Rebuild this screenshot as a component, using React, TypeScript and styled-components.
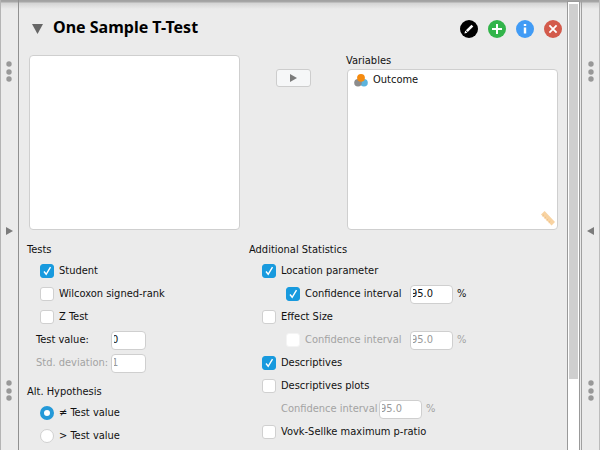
import React from 'react';
import styled, { createGlobalStyle } from 'styled-components';

const GlobalStyle = createGlobalStyle`
  * { box-sizing: border-box; }
  body {
    margin: 0;
    background: #ebebeb;
    color: #111;
    font-family: "DejaVu Sans Condensed", "Noto Sans", sans-serif;
    font-size: 11px;
    line-height: 14px;
  }
`;

const Page = styled.div`
  display: flex;
  height: 100vh;
  overflow: hidden;
  background:
    linear-gradient(#a0a0a0 0, #a8a8a8 2px, #d4d4d4 3px, #ebebeb 9px) no-repeat #ebebeb;
`;

const Rail = styled.aside<{ $side: 'left' | 'right' }>`
  display: flex;
  flex: none;
  flex-direction: column;
  align-items: center;
  justify-content: space-between;
  width: ${p => (p.$side === 'left' ? 19 : 18)}px;
  padding: 61px 1px 49px 0;
  border-left: 1px solid ${p => (p.$side === 'left' ? '#b4b4b4' : 'transparent')};
  border-right: 1px solid ${p => (p.$side === 'left' ? '#909090' : '#bcbcbc')};
`;

const Panel = styled.main`
  flex: 1;
  min-width: 0;
`;

const Header = styled.header`
  display: flex;
  align-items: center;
  gap: 10px;
  padding: 19px 5px 0 13px;
  height: 38px;
`;

const PlainButton = styled.button`
  display: flex;
  padding: 0;
  border: 0;
  background: none;
`;

const Title = styled.h1`
  flex: 1;
  margin: 0;
  padding-bottom: 4px;
  color: #000;
  font: bold 16px/18px "Noto Sans", sans-serif;
`;

const Assign = styled.section`
  display: grid;
  grid-template-columns: 1fr 107px 1fr;
  padding: 17px 9px 0 10px;
`;

const ListColumn = styled.div`
  display: flex;
  flex-direction: column;
  height: 175px;
`;

const ListLabel = styled.div`
  height: 14px;
  line-height: 12px;
  margin-left: -1px;
`;

const ListBox = styled.div`
  display: flex;
  flex: 1;
  flex-direction: column;
  justify-content: space-between;
  padding: 3px 2px 1px 6px;
  border: 1px solid #cfcfcf;
  border-radius: 4px;
  background: #fff;
`;

const Variable = styled.div`
  display: flex;
  align-items: center;
  gap: 5px;
`;

const Ruler = styled.svg`
  align-self: flex-end;
`;

const AssignButton = styled.button`
  display: flex;
  align-items: center;
  justify-content: center;
  justify-self: center;
  width: 35px;
  height: 18px;
  margin-top: 14px;
  padding: 0;
  border: 1px solid #cdcdcd;
  border-radius: 3px;
  background: #f6f7f8;
`;

const Options = styled.section`
  display: grid;
  grid-template-columns: 222px 1fr;
  padding: 10px 0 0 8px;
`;

const Group = styled.fieldset`
  margin: 0;
  padding: 0;
  border: 0;
  min-width: 0;
`;

const Heading = styled.legend<{ $spaced?: boolean }>`
  display: block;
  height: ${p => (p.$spaced ? 27 : 20)}px;
  padding: ${p => (p.$spaced ? 10 : 3)}px 0 0;
`;

const Row = styled.div<{ $indent: number; $off?: boolean }>`
  display: flex;
  align-items: center;
  height: 23px;
  padding: 0 0 1px ${p => p.$indent}px;
  color: ${p => (p.$off ? '#a3a3a3' : '#111')};
`;

const Choice = styled.label<{ $width?: number }>`
  display: flex;
  align-items: center;
  gap: 5px;
  width: ${p => (p.$width ? `${p.$width}px` : 'auto')};
  white-space: nowrap;
`;

const Caption = styled.span``;

const Mark = styled.span`
  display: grid;
  width: 14px;
  height: 14px;

  > * { grid-area: 1 / 1; }
  > svg { pointer-events: none; }
`;

const Tick = styled.input`
  appearance: none;
  width: 14px;
  height: 14px;
  margin: 0;
  border: 1px solid #d0d0d0;
  border-radius: 3px;
  background: #fff;

  &:checked { border-color: #189ade; background: #189ade; }
  &:disabled { border-color: #f4f4f4; }
  & + svg { visibility: hidden; }
  &:checked + svg { visibility: visible; }
`;

const Radio = styled.input`
  appearance: none;
  width: 14px;
  height: 14px;
  margin: 0;
  border: 1px solid #d0d0d0;
  border-radius: 50%;
  background: #fff;

  &:checked { border: 4px solid #2499d8; }
`;

const FieldLabel = styled.label<{ $width: number }>`
  flex: none;
  width: ${p => p.$width}px;
  white-space: nowrap;
`;

const Field = styled.input<{ $width: number }>`
  width: ${p => p.$width}px;
  height: 19px;
  margin: 0 4px 0 0;
  padding: 0 0 1px 2px;
  border: 1px solid #cfcfcf;
  border-radius: 4px;
  outline: 0;
  background: #fff;
  color: #111;
  font: inherit;
  text-indent: -2px;

  &:disabled { color: #999; }
`;

const ScrollTrack = styled.div`
  flex: none;
  width: 13px;
  margin-top: 1px;
  border: 1px solid #999;
  border-width: 1px 1px 0;
  background: #fff;
  padding: 2px 1px 0;
`;

const ScrollThumb = styled.div`
  height: 84%;
  background: #cfcfcf;
`;

const Divider = styled.div`
  flex: none;
  width: 2px;
  margin-top: 1px;
  border-right: 1px solid #a0a0a0;
`;

const Dots = () => (
  <svg width="6" height="21" viewBox="0 0 6 21" fill="#989898">
    <circle cx="3" cy="3" r="2.7" />
    <circle cx="3" cy="11" r="2.7" />
    <circle cx="3" cy="18" r="2.7" />
  </svg>
);

const Arrow = ({ flip }: { flip?: boolean }) => (
  <svg width="7" height="8" viewBox="0 0 7 8">
    <path d={flip ? 'M7 0v8L0 4z' : 'M0 0v8l7-4z'} fill="#7b7b7b" />
  </svg>
);

const RailContent = ({ side }: { side: 'left' | 'right' }) => (
  <Rail $side={side}>
    <Dots />
    <PlainButton aria-label="Toggle panel"><Arrow flip={side === 'right'} /></PlainButton>
    <Dots />
  </Rail>
);

const RoundButton = ({ label, color, children }: { label: string; color: string; children: React.ReactNode }) => (
  <PlainButton aria-label={label}>
    <svg width="18" height="18" viewBox="0 0 18 18" fill="none" stroke="#fff">
      <circle cx="9" cy="9" r="9" fill={color} stroke="none" />
      {children}
    </svg>
  </PlainButton>
);

const Check = ({ text, checked, disabled, width }: { text: string; checked?: boolean; disabled?: boolean; width?: number }) => (
  <Choice $width={width}>
    <Mark>
      <Tick type="checkbox" defaultChecked={checked} disabled={disabled} />
      <svg width="14" height="14" viewBox="0 0 14 14" fill="none" stroke="#fff" strokeWidth="1.4">
        <path d="M4 7.5l2.2 2.8L10.5 3.2" />
      </svg>
    </Mark>
    <Caption>{text}</Caption>
  </Choice>
);

export default function App() {
  return (
    <>
      <GlobalStyle />
      <Page>
        <RailContent side="left" />
        <Panel>
          <Header>
            <PlainButton aria-label="Collapse">
              <svg width="11" height="10" viewBox="0 0 11 10"><path d="M0 0h11L5.5 10z" fill="#666" /></svg>
            </PlainButton>
            <Title>One Sample T-Test</Title>
            <RoundButton label="Rename" color="#000">
              <path d="M6.8 11.2L12.4 5.6" strokeWidth="2.6" />
              <path d="M4.4 13.6l.9-3 2.1 2.1z" fill="#fff" stroke="none" />
            </RoundButton>
            <RoundButton label="Duplicate" color="#32b44a">
              <path d="M9 4v10M4 9h10" strokeWidth="2" />
            </RoundButton>
            <RoundButton label="Information" color="#419bf5">
              <path d="M9 7.4v6M9 4v2" strokeWidth="2.4" />
            </RoundButton>
            <RoundButton label="Remove" color="#d35a4b">
              <path d="M5.4 5.4l7.2 7.2M12.6 5.4l-7.2 7.2" strokeWidth="1.8" />
            </RoundButton>
          </Header>

          <Assign>
            <ListColumn><ListBox /></ListColumn>
            <AssignButton aria-label="Assign variable"><Arrow /></AssignButton>
            <ListColumn>
              <ListLabel>Variables</ListLabel>
              <ListBox>
                <Variable>
                  <svg width="14" height="14" viewBox="0 0 14 14">
                    <circle cx="10" cy="9.8" r="3.8" fill="#5cb3dc" />
                    <circle cx="4" cy="9.8" r="3.8" fill="#8c8c8c" />
                    <circle cx="7" cy="4.8" r="3.9" fill="#f58b10" />
                  </svg>
                  <Caption>Outcome</Caption>
                </Variable>
                <Ruler width="14" height="17" viewBox="0 0 14 17">
                  <path d="M3.6 0L14 11 10.6 14.4 0 3.6z" fill="#f8d3a2" />
                  <path d="M1.5 5.1l1.5-1.4M3.6 7.2l1.5-1.4M5.7 9.4l1.5-1.4M7.8 11.5l1.5-1.4" stroke="#eebf88" />
                </Ruler>
              </ListBox>
            </ListColumn>
          </Assign>

          <Options>
            <div>
              <Group>
                <Heading>Tests</Heading>
                <Row $indent={13}><Check text="Student" checked /></Row>
                <Row $indent={13}><Check text="Wilcoxon signed-rank" /></Row>
                <Row $indent={13}><Check text="Z Test" /></Row>
                <Row $indent={9}>
                  <FieldLabel htmlFor="test-value" $width={75}>Test value:</FieldLabel>
                  <Field id="test-value" $width={35} defaultValue="0" />
                </Row>
                <Row $indent={9} $off>
                  <FieldLabel htmlFor="deviation" $width={75}>Std. deviation:</FieldLabel>
                  <Field id="deviation" $width={35} defaultValue="1" disabled />
                </Row>
              </Group>
              <Group>
                <Heading $spaced>Alt. Hypothesis</Heading>
                <Row $indent={13}>
                  <Choice><Radio type="radio" name="hypothesis" defaultChecked /><Caption>≠ Test value</Caption></Choice>
                </Row>
                <Row $indent={13}>
                  <Choice><Radio type="radio" name="hypothesis" /><Caption>&gt; Test value</Caption></Choice>
                </Row>
              </Group>
            </div>
            <Group>
              <Heading>Additional Statistics</Heading>
              <Row $indent={13}><Check text="Location parameter" checked /></Row>
              <Row $indent={37}>
                <Check text="Confidence interval" checked width={124} />
                <Field aria-label="Location interval" $width={43} defaultValue="95.0" />
                <Caption>%</Caption>
              </Row>
              <Row $indent={13}><Check text="Effect Size" /></Row>
              <Row $indent={37} $off>
                <Check text="Confidence interval" disabled width={124} />
                <Field aria-label="Effect size interval" $width={43} defaultValue="95.0" disabled />
                <Caption>%</Caption>
              </Row>
              <Row $indent={13}><Check text="Descriptives" checked /></Row>
              <Row $indent={13}><Check text="Descriptives plots" /></Row>
              <Row $indent={32} $off>
                <FieldLabel htmlFor="plot-interval" $width={98}>Confidence interval</FieldLabel>
                <Field id="plot-interval" $width={43} defaultValue="95.0" disabled />
                <Caption>%</Caption>
              </Row>
              <Row $indent={13}><Check text="Vovk-Sellke maximum p-ratio" /></Row>
            </Group>
          </Options>
        </Panel>
        <ScrollTrack><ScrollThumb /></ScrollTrack>
        <Divider />
        <RailContent side="right" />
      </Page>
    </>
  );
}
